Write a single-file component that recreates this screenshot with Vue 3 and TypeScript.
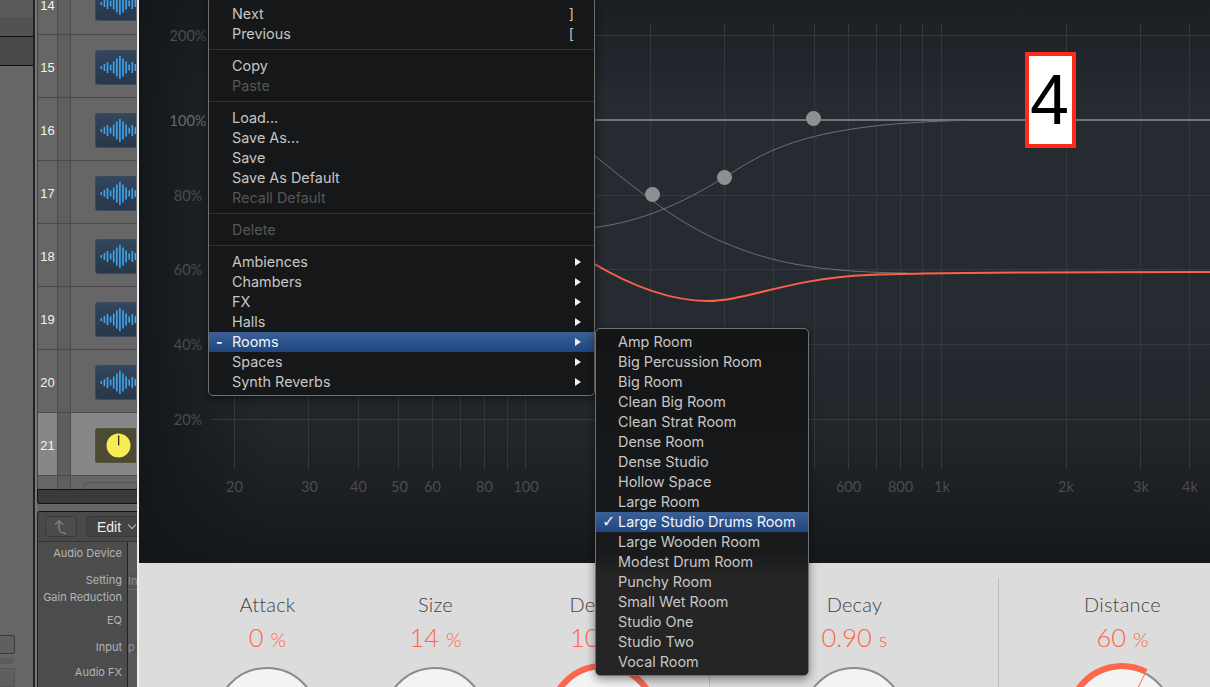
<template>
  <div class="app">
    <aside class="logic">
      <div class="far-pane">
        <div class="far-top a"></div>
        <div class="far-top b"></div>
        <div class="far-top c"></div>
        <div class="far-bottom">
          <div class="far-box"></div>
          <div class="far-bar"></div>
          <div class="far-box2"></div>
        </div>
      </div>
      <div class="pane-split"></div>
      <div class="main-col">
        <div class="tracks">
          <div v-for="t in tracks" :key="t.num" class="track" :class="{ first: t.num === 14, lit: t.num === 21 }">
            <span class="track-num">{{ t.num }}</span>
            <span class="track-strip"></span>
            <div class="tile" :class="{ aux: t.num === 21 }">
              <svg v-if="t.num !== 21" width="41" height="35" viewBox="0 0 41 35">
                <rect v-for="b in waveBars" :key="b.x" :x="b.x" :y="17.5 - b.h" width="1.6" :height="b.h * 2" fill="#3fa6ee" />
              </svg>
              <svg v-else width="41" height="35" viewBox="0 0 41 35">
                <circle cx="23.500" cy="17.500" r="12" fill="#f8ec55" />
                <rect x="23" y="7.500" width="1.300" height="10" fill="#2c2c20" />
              </svg>
            </div>
          </div>
          <div class="track-tail">
            <span class="tail-num"></span>
            <span class="track-strip"></span>
            <span class="tail-pill"></span>
          </div>
        </div>
        <div class="track-foot"></div>
        <div class="inspector">
          <div class="insp-head">
            <span class="insp-btn back">
              <svg width="14" height="16" viewBox="0 0 14 16">
                <path d="M1 6 L5 1.500 L9 6 M5 2 V9 Q5 14 12 14.500" fill="none" stroke="#9a9a9a" stroke-width="1" />
              </svg>
            </span>
            <span class="insp-btn edit">Edit <i class="edit-chev"></i></span>
          </div>
          <div class="insp-body">
            <div class="insp-labels">
              <span class="l1">Audio Device</span>
              <span class="l2">Setting</span>
              <span class="l3">Gain Reduction</span>
              <span class="l4">EQ</span>
              <span class="l5">Input</span>
              <span class="l6">Audio FX</span>
            </div>
            <div class="insp-strip">
              <span class="cut c1">In</span>
              <span class="cut c2">p</span>
            </div>
          </div>
        </div>
      </div>
    </aside>

    <section class="plugin">
      <div class="graph">
        <svg class="graph-svg" width="1072" height="563" viewBox="138 0 1072 563">
          <line v-for="y in gridY" :key="y" x1="211" x2="1210" :y1="y" :y2="y" stroke="#353a42" stroke-width="1" />
          <line v-for="x in gridX" :key="x" :x1="x" :x2="x" y1="24" y2="469" stroke="#34383e" stroke-width="1" />
          <text v-for="l in yLabels" :key="l.text" x="187" :y="l.y + 6" class="axis" :class="{ bright: l.text === '100%' }" text-anchor="middle">{{ l.text }}</text>
          <text v-for="l in xLabels" :key="l.text" :x="l.x" y="492" class="axis" text-anchor="middle">{{ l.text }}</text>
          <line x1="590" x2="1210" y1="120" y2="120" stroke="#8c8e90" stroke-width="1.400" />
          <path d="M590 228 C640 222 680 204 724 177 C770 148 810 122 985 120" fill="none" stroke="#6e7072" stroke-width="1" />
          <path d="M590 153 C625 180 672 222 724 243 C760 257.500 800 272 906 273" fill="none" stroke="#6e7072" stroke-width="1" />
          <path d="M590 262 C625 283 665 301 707 301 C745 301 790 278 867 275 C900 273.500 1000 272 1210 272" fill="none" stroke="#ff6048" stroke-width="2" />
          <circle cx="651.500" cy="194.500" r="7.500" fill="#8d8f91" />
          <circle cx="723.500" cy="177.500" r="7.500" fill="#8d8f91" />
          <circle cx="812.500" cy="118.500" r="7.500" fill="#8d8f91" />
        </svg>
        <div class="step-badge">4</div>
      </div>

      <div class="params">
        <div v-for="(g, i) in groups" :key="i" class="param-group" :class="'g' + i">
          <div v-for="p in g" :key="p.label" class="param">
            <div class="param-label">{{ p.label }}</div>
            <div class="param-value">{{ p.value }} <small>{{ p.unit }}</small></div>
            <svg class="knob" width="124" height="90" viewBox="0 0 124 90">
              <circle cx="62" cy="58" r="51" fill="#f3f3f3" stroke="#8b8b8b" stroke-width="2" />
              <path v-if="p.amount > 0" :d="arcPath(p.amount)" fill="none" stroke="#ff674c" stroke-width="6" />
              <line v-if="p.amount > 0" x1="62" y1="58" :x2="tip(p.amount).x" :y2="tip(p.amount).y" stroke="#ff674c" stroke-width="1" />
            </svg>
          </div>
        </div>
      </div>
    </section>

    <div class="menu menu-main">
      <template v-for="(item, i) in mainMenu" :key="i">
        <div v-if="item.sep" class="menu-sep"></div>
        <div v-else class="menu-item" :class="{ off: item.off, active: item.active }">
          <span v-if="item.active" class="mark">-</span>
          <span>{{ item.label }}</span>
          <span v-if="item.key" class="menu-key">{{ item.key }}</span>
          <i v-if="item.sub" class="menu-arrow"></i>
        </div>
      </template>
    </div>

    <div class="menu menu-sub">
      <div v-for="name in rooms" :key="name" class="menu-item sub-item" :class="{ active: name === current }">
        <span v-if="name === current" class="check">✓</span>
        <span>{{ name }}</span>
      </div>
    </div>
  </div>
</template>

<script setup lang="ts">
interface MenuItem {
  label?: string
  key?: string
  off?: boolean
  sub?: boolean
  active?: boolean
  sep?: boolean
}

interface Param {
  label: string
  value: string
  unit: string
  amount: number
}

const tracks = [14, 15, 16, 17, 18, 19, 20, 21].map((num) => ({ num }))

// half heights of the waveform, mirrored round the tall middle bar
const heights = [1.5, 3.5, 5.5, 3, 6, 9, 11.5, 9, 6, 3, 5.5, 3.5, 1.5]
const waveBars = heights.map((h, i) => ({ x: 5.5 + i * 3.1, h }))

const gridX = [233, 307, 357, 397, 431, 459, 483, 506, 524, 649, 723, 772, 813, 847, 875, 899, 921, 940, 1065, 1139, 1188].map((x) => x + 0.5)
const gridY = [35.5, 195.5, 269.5, 344.5, 419.5]

const yLabels = [
  { text: '200%', y: 35 },
  { text: '100%', y: 120 },
  { text: '80%', y: 195 },
  { text: '60%', y: 269 },
  { text: '40%', y: 344 },
  { text: '20%', y: 419 }
]

const xLabels = [
  { text: '20', x: 233.5 },
  { text: '30', x: 308.5 },
  { text: '40', x: 357.5 },
  { text: '50', x: 398.5 },
  { text: '60', x: 431.5 },
  { text: '80', x: 483.5 },
  { text: '100', x: 525 },
  { text: '600', x: 847.5 },
  { text: '800', x: 899.5 },
  { text: '1k', x: 941 },
  { text: '2k', x: 1065 },
  { text: '3k', x: 1140 },
  { text: '4k', x: 1189 }
]

const groups: Param[][] = [
  [
    { label: 'Attack', value: '0', unit: '%', amount: 0 },
    { label: 'Size', value: '14', unit: '%', amount: 0 },
    { label: 'Density', value: '100', unit: '%', amount: 1 }
  ],
  [{ label: 'Decay', value: '0.90', unit: 's', amount: 0 }],
  [{ label: 'Distance', value: '60', unit: '%', amount: 0.6 }]
]

const polar = (deg: number, r: number) => {
  const a = (deg * Math.PI) / 180
  return { x: 62 + r * Math.sin(a), y: 58 - r * Math.cos(a) }
}

const arcPath = (amount: number) => {
  const end = -135 + amount * 270
  const p0 = polar(-135, 53)
  const p1 = polar(end, 53)
  const large = end + 135 > 180 ? 1 : 0
  return `M${p0.x} ${p0.y} A53 53 0 ${large} 1 ${p1.x} ${p1.y}`
}

const tip = (amount: number) => polar(-135 + amount * 270, 50)

const mainMenu: MenuItem[] = [
  { label: 'Next', key: ']' },
  { label: 'Previous', key: '[' },
  { sep: true },
  { label: 'Copy' },
  { label: 'Paste', off: true },
  { sep: true },
  { label: 'Load...' },
  { label: 'Save As...' },
  { label: 'Save' },
  { label: 'Save As Default' },
  { label: 'Recall Default', off: true },
  { sep: true },
  { label: 'Delete', off: true },
  { sep: true },
  { label: 'Ambiences', sub: true },
  { label: 'Chambers', sub: true },
  { label: 'FX', sub: true },
  { label: 'Halls', sub: true },
  { label: 'Rooms', sub: true, active: true },
  { label: 'Spaces', sub: true },
  { label: 'Synth Reverbs', sub: true }
]

const current = 'Large Studio Drums Room'

const rooms = [
  'Amp Room',
  'Big Percussion Room',
  'Big Room',
  'Clean Big Room',
  'Clean Strat Room',
  'Dense Room',
  'Dense Studio',
  'Hollow Space',
  'Large Room',
  current,
  'Large Wooden Room',
  'Modest Drum Room',
  'Punchy Room',
  'Small Wet Room',
  'Studio One',
  'Studio Two',
  'Vocal Room'
]
</script>

<style>
html,
body {
  margin: 0;
  overflow: hidden;
  background: #222;
}
</style>

<style scoped>
.app {
  position: relative;
  display: flex;
  width: 1210px;
  height: 687px;
  overflow: hidden;
  font-family: Inter, 'Liberation Sans', sans-serif;
}

/* logic pro side */
.logic {
  display: flex;
  flex: 0 0 136px;
  background: #666;
}

.far-pane {
  display: flex;
  flex-direction: column;
  flex: 0 0 33px;
  background: #666;
}

.far-top.a {
  height: 17px;
  background: #5a5a5a;
}

.far-top.b {
  height: 19px;
  background: #525252;
  border-bottom: 1px solid #111;
}

.far-top.c {
  height: 28px;
  background: #494949;
  border-bottom: 1px solid #111;
}

.far-bottom {
  margin-top: auto;
  display: flex;
  flex-direction: column;
}

.far-box {
  width: 14px;
  height: 17px;
  background: #5f5f5f;
  border: 1px solid #3a3a3a;
  border-left: 0;
  border-radius: 0 3px 3px 0;
}

.far-bar {
  width: 14px;
  height: 6px;
  margin-top: 4px;
  background: #5c5c5c;
}

.far-box2 {
  width: 14px;
  height: 17px;
  margin-top: 4px;
  background: #5f5f5f;
  border: 1px solid #555;
  border-left: 0;
}

.pane-split {
  flex: 0 0 4px;
  box-sizing: border-box;
  background: #777;
  border-left: 2px solid #222;
}

.main-col {
  display: flex;
  flex-direction: column;
  flex: 1;
  min-width: 0;
}

.tracks {
  border-left: 1px solid #444;
  box-sizing: border-box;
}

.track {
  display: flex;
  align-items: center;
  height: 63px;
  box-sizing: border-box;
  padding-top: 2px;
  border-bottom: 1px solid #4a4a4a;
  overflow: hidden;
  background: #666;
}

.track.first {
  height: 35px;
  padding-top: 0;
  align-items: flex-end;
}

.track.lit {
  background: #868686;
}

.track-num {
  flex: 0 0 19px;
  color: #f2f2f2;
  font: 13px 'Liberation Sans', sans-serif;
  text-align: center;
}

.track.first .track-num {
  align-self: flex-start;
  margin-top: -2px;
}

.track-strip {
  flex: 0 0 12px;
  align-self: stretch;
  margin-top: -2px;
  background: #5e5e5e;
  border-left: 1px solid #4e4e4e;
  border-right: 1px solid #4e4e4e;
}

.track.first .track-strip {
  margin-top: 0;
}

.tile {
  flex: 0 0 41px;
  height: 35px;
  margin-left: 24px;
  background: linear-gradient(#33465d, #28374a);
  border: 1px solid #3d4a59;
  border-right: 0;
  border-radius: 3px 0 0 3px;
  box-sizing: border-box;
}

.track.first .tile {
  margin-top: -14px;
  margin-bottom: 13px;
  height: 35px;
}

.tile svg {
  display: block;
  margin: -1px 0 0 -1px;
}

.tile.aux {
  background: #4c4a33;
  border-color: #55533a;
}

.track-tail {
  display: flex;
  height: 13px;
  background: #666;
}

.tail-num {
  flex: 0 0 19px;
}

.track-tail .track-strip {
  margin-top: 0;
}

.tail-pill {
  flex: 1;
  margin: 6px 0 0 12px;
  border: 1px solid #555;
  border-bottom: 0;
  border-radius: 6px 0 0 0;
}

.track-foot {
  height: 13px;
  background: #3a3a3a;
  border-top: 1px solid #111;
  border-bottom: 1px solid #111;
  border-left: 1px solid #111;
  border-radius: 0 0 0 3px;
  flex-shrink: 0;
}

.inspector {
  flex: 1;
  margin-top: 7px;
  min-height: 0;
  background: #494949;
  border-top: 1px solid #111;
  border-left: 1px solid #222;
  border-radius: 3px 0 0 0;
  display: flex;
  flex-direction: column;
}

.insp-head {
  display: flex;
  gap: 9px;
  height: 29px;
  flex-shrink: 0;
  padding: 4px 0 0 7px;
  box-sizing: border-box;
}

.insp-btn {
  height: 21px;
  box-sizing: border-box;
  background: #434343;
  border: 1px solid #393939;
  border-radius: 4px;
  display: flex;
  align-items: center;
  justify-content: center;
}

.back {
  width: 32px;
  background: #4c4c4c;
}

.edit {
  flex: 1;
  justify-content: flex-start;
  padding-left: 10px;
  border-right: 0;
  border-radius: 4px 0 0 4px;
  color: #eee;
  font: 14px 'Liberation Sans', sans-serif;
  gap: 8px;
}

.edit-chev {
  display: block;
  width: 5px;
  height: 5px;
  border-right: 1px solid #bbb;
  border-bottom: 1px solid #bbb;
  transform: rotate(45deg);
  margin-top: -4px;
}

.insp-body {
  display: flex;
  flex: 1;
  border-top: 1px solid #333;
  min-height: 0;
}

.insp-labels {
  flex: 0 0 90px;
  display: flex;
  flex-direction: column;
  align-items: flex-end;
  padding: 4px 5px 0 0;
  box-sizing: border-box;
  background: #4c4c4c;
  border-right: 1px solid #222;
  color: #b4b4b4;
  font: 11px/15px Inter, 'Liberation Sans', sans-serif;
}

.l2 {
  margin-top: 12px;
}

.l3 {
  margin-top: 2px;
}

.l4 {
  margin-top: 8px;
}

.l5 {
  margin-top: 12px;
}

.l6 {
  margin-top: 10px;
}

.insp-strip {
  flex: 1;
  display: flex;
  flex-direction: column;
  overflow: hidden;
  background: #585858;
  color: #909090;
  font: 11px Inter, 'Liberation Sans', sans-serif;
}

.cut {
  display: block;
}

.c1 {
  margin-top: 31px;
  padding-block: 1px;
  background: #555;
  border-bottom: 1px solid #666;
}

.c2 {
  margin-top: 50px;
  background: #555;
}

/* plugin */
.plugin {
  flex: 1;
  display: flex;
  flex-direction: column;
  min-width: 0;
  border-left: 2px solid #ededed;
}

.graph {
  position: relative;
  flex: 0 0 563px;
  background:
    linear-gradient(90deg, #14171a 0, rgba(20, 23, 26, 0) 130px),
    linear-gradient(#1b1e22 0, #262a31 100px, #262a31 330px, #22262a 430px, #15181b 563px);
}

.graph-svg {
  display: block;
}

.axis {
  fill: #494c50;
  font: 14.500px Lato, 'Liberation Sans', sans-serif;
}

.axis.bright {
  fill: #66696c;
}

.step-badge {
  position: absolute;
  left: 886px;
  top: 52px;
  width: 51px;
  height: 96px;
  box-sizing: border-box;
  border: 4px solid #ff2a1a;
  padding-right: 3px;
  background: #fff;
  color: #000;
  font: 70px/88px 'Liberation Sans', sans-serif;
  text-align: center;
}

.params {
  flex: 1;
  display: flex;
  padding-top: 15px;
  min-height: 0;
  overflow: hidden;
  background: #dcdcdc;
}

.param-group {
  display: flex;
  flex-shrink: 0;
  border-left: 1px solid #bdbdbd;
}

.g0 {
  width: 570px;
  padding-left: 44px;
  box-sizing: border-box;
  border-left: 0;
}

.g1 {
  width: 289px;
  box-sizing: border-box;
}

.g2 {
  width: 246px;
}

.param {
  flex: 0 0 168px;
  display: flex;
  flex-direction: column;
  align-items: center;
  padding-top: 15px;
}

.g1 .param,
.g2 .param {
  flex: 1;
}

.param-label {
  color: #444;
  font: 300 20px/22px Lato, 'Liberation Sans', sans-serif;
  letter-spacing: 0.2px;
}

.param-value {
  margin-top: 7px;
  color: #ff6347;
  font: 300 25.500px/30px Lato, 'Liberation Sans', sans-serif;
}

.param-value small {
  font-size: 20px;
}

.knob {
  display: block;
  flex-shrink: 0;
  margin-top: 7px;
}

/* popup menus */
.menu {
  position: absolute;
  box-sizing: border-box;
  border: 1px solid #6f6f6f;
  border-radius: 5px;
  box-shadow: 0 3px 10px rgba(0, 0, 0, 0.45);
  color: #c6c6c6;
  font: 14.400px/20px Inter, 'Liberation Sans', sans-serif;
}

.menu-main {
  left: 208px;
  top: -3px;
  width: 387px;
  height: 399px;
  padding-top: 6px;
  background: #161718;
}

.menu-sub {
  left: 595px;
  top: 328px;
  width: 214px;
  height: 348px;
  padding-top: 3px;
  background: linear-gradient(#131415 0, #191a1b 65%, #252525 72%, #242424 100%);
}

.menu-item {
  position: relative;
  height: 20px;
  padding-left: 23px;
  white-space: nowrap;
}

.sub-item {
  padding-left: 22px;
}

.menu-item.off {
  color: #565656;
}

.menu-item.active {
  background: linear-gradient(#3c6096, #1f4682);
  color: #f0f4fb;
}

.menu-sep {
  height: 1px;
  margin: 5px 0 6px;
  background: #333;
}

.mark {
  position: absolute;
  left: 7px;
  font-weight: 700;
}

.check {
  position: absolute;
  left: 6px;
  font: bold 16px/20px 'DejaVu Sans', sans-serif;
}

.menu-key {
  position: absolute;
  right: 20px;
}

.menu-arrow {
  position: absolute;
  right: 13px;
  top: 6px;
  border-left: 6px solid #eee;
  border-top: 4px solid transparent;
  border-bottom: 4px solid transparent;
}
</style>
